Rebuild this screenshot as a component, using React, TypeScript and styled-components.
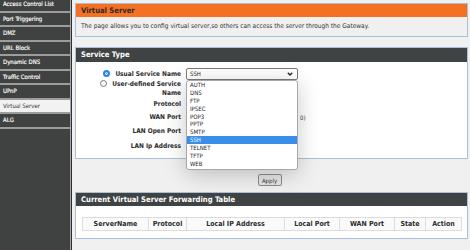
import React from "react";
import styled, { createGlobalStyle } from "styled-components";

const FONT = `"DejaVu Sans Condensed", "DejaVu Sans", Tahoma, sans-serif`;

const GlobalStyle = createGlobalStyle`
  html, body { margin: 0; padding: 0; }
  body {
    background: #f0f0f0;
    font-family: ${FONT};
    color: #333;
    overflow: hidden;
  }
  * { box-sizing: border-box; }
`;

const Page = styled.div`
  display: flex;
  width: 470px;
  height: 250px;
  overflow: hidden;
`;

const Nav = styled.nav`
  width: 71px;
  flex-shrink: 0;
  background: #404242;
  border-right: 1px solid #a3a3a3;
  box-shadow: 1px 0 0 #2f3131;
  overflow: hidden;
`;

const NavList = styled.ul`
  list-style: none;
  margin: -2px 0 0;
  padding: 0;
`;

const NavItem = styled.li<{ $active?: boolean }>`
  height: 14.5px;
  line-height: 12.5px;
  padding-left: 3px;
  font-size: 6px;
  font-weight: normal;
  color: ${(p) => (p.$active ? "#333" : "#fff")};
  background: ${(p) => (p.$active ? "#f2f2f2" : "#404242")};
  border-bottom: 2px solid #9d9d9d;
  white-space: nowrap;
  -webkit-text-stroke: ${(p) => (p.$active ? "0" : "0.15px #fff")};
`;

const Main = styled.main`
  flex: 1;
  min-width: 0;
  padding: 3px 2px 0 4px;
  display: flex;
  flex-direction: column;
`;

const Panel = styled.section<{ $gap?: number }>`
  border: 1px solid #a9c0d8;
  margin-bottom: ${(p) => p.$gap ?? 0}px;
`;

const PanelHeader = styled.h2<{ $tone: "orange" | "dark"; $h: number }>`
  margin: 0;
  height: ${(p) => p.$h}px;
  line-height: ${(p) => p.$h}px;
  padding-left: 5px;
  font-size: 7.6px;
  font-weight: bold;
  letter-spacing: 0;
  color: ${(p) => (p.$tone === "orange" ? "#2b2b2b" : "#fff")};
  background: ${(p) => (p.$tone === "orange" ? "#f47023" : "#404343")};
`;

const InfoBody = styled.div`
  height: 19px;
  line-height: 19px;
  padding-left: 5px;
  font-size: 6.5px;
  color: #333;
  background: #f0f0f0;
`;

const FormBody = styled.div`
  height: 96px;
  background: #fff;
  padding: 6px 0 0 18px;
`;

const FormGrid = styled.div`
  display: grid;
  grid-template-columns: 87px 112px;
  grid-template-rows: 12px 18px 12px 14px 14px 16px;
  column-gap: 5px;
  align-items: center;
`;

const Label = styled.div`
  text-align: right;
  font-size: 6.5px;
  font-weight: bold;
  line-height: 9px;
  color: #2a2a2a;
`;

const Radio = styled.span<{ $checked?: boolean }>`
  display: inline-block;
  width: 7px;
  height: 7px;
  margin-right: 5px;
  vertical-align: -1px;
  border-radius: 50%;
  border: ${(p) => (p.$checked ? "2px solid #2b83e8" : "1px solid #777")};
  background: ${(p) => (p.$checked ? "#2b83e8" : "#fff")};
  box-shadow: ${(p) => (p.$checked ? "inset 0 0 0 1px #fff" : "none")};
`;

const Field = styled.div`
  display: flex;
  align-items: center;
  gap: 2px;
  position: relative;
  height: 100%;
`;

const SelectBox = styled.div`
  position: relative;
  width: 112px;
  height: 12px;
  border: 1px solid #7a7a7a;
  border-radius: 2px;
  background: #fff;
  font-size: 6px;
  line-height: 10px;
  padding-left: 3px;
  color: #222;
  display: flex;
  align-items: center;
  justify-content: space-between;
  padding-right: 4px;
`;

const TextInput = styled.div<{ $w: number }>`
  width: ${(p) => p.$w}px;
  height: 11px;
  border: 1px solid #8a8a8a;
  border-radius: 1px;
  background: #fff;
  flex-shrink: 0;
`;

const Hint = styled.span`
  font-size: 6px;
  color: #333;
  white-space: nowrap;
`;

const Popup = styled.ul`
  position: absolute;
  z-index: 5;
  top: 11px;
  left: -1px;
  width: 112px;
  margin: 0;
  padding: 0 0 1px;
  list-style: none;
  background: #fff;
  border: 1px solid #a7a7a7;
  border-radius: 3px;
  box-shadow: 0 4px 22px rgba(0, 0, 0, 0.22);
`;

const Option = styled.li<{ $sel?: boolean }>`
  height: 7.9px;
  line-height: 7.9px;
  padding-left: 3px;
  font-size: 6px;
  color: ${(p) => (p.$sel ? "#fff" : "#222")};
  background: ${(p) => (p.$sel ? "#3a8de8" : "transparent")};
`;

const ApplyRow = styled.div`
  display: flex;
  justify-content: center;
  padding: 15px 0 6px;
`;

const Button = styled.button`
  width: 24px;
  height: 12px;
  padding: 0;
  margin-left: -4px;
  font-family: ${FONT};
  font-size: 6px;
  color: #333;
  background: #e6e6e6;
  border: 1px solid #8c8c8c;
  border-radius: 2px;
`;

const TableBody = styled.div`
  height: 32px;
  background: #fff;
  padding: 11px 5px 0 6px;
`;

const Table = styled.table`
  width: 100%;
  border-collapse: collapse;
  table-layout: fixed;
`;

const Th = styled.th<{ $w: number }>`
  width: ${(p) => p.$w}px;
  height: 13px;
  padding: 0;
  font-size: 7px;
  font-weight: bold;
  color: #2a2a2a;
  text-align: center;
  background: #fafafa;
  border: 1px solid #dcdcdc;
`;

const Chevron = () => (
  <svg width="6" height="4" viewBox="0 0 6 4">
    <polyline points="0.8,0.8 3,3 5.2,0.8" fill="none" stroke="#222" strokeWidth="1.3" />
  </svg>
);

const navItems = [
  "Access Control List",
  "Port Triggering",
  "DMZ",
  "URL Block",
  "Dynamic DNS",
  "Traffic Control",
  "UPnP",
  "Virtual Server",
  "ALG",
];

const services = ["AUTH", "DNS", "FTP", "IPSEC", "POP3", "PPTP", "SMTP", "SSH", "TELNET", "TFTP", "WEB"];

const columns: [string, number][] = [
  ["ServerName", 66],
  ["Protocol", 38],
  ["Local IP Address", 98],
  ["Local Port", 55],
  ["WAN Port", 55],
  ["State", 31],
  ["Action", 36],
];

export default function App() {
  return (
    <>
      <GlobalStyle />
      <Page>
        <Nav>
          <NavList>
            {navItems.map((n) => (
              <NavItem key={n} $active={n === "Virtual Server"}>
                {n}
              </NavItem>
            ))}
          </NavList>
        </Nav>
        <Main>
          <Panel $gap={10}>
            <PanelHeader $tone="orange" $h={13}>Virtual Server</PanelHeader>
            <InfoBody>
              The page allows you to config virtual server,so others can access the server through the Gateway.
            </InfoBody>
          </Panel>

          <Panel>
            <PanelHeader $tone="dark" $h={14}>Service Type</PanelHeader>
            <FormBody>
              <FormGrid>
                <Label>
                  <Radio $checked />
                  Usual Service Name
                </Label>
                <Field>
                  <SelectBox>
                    <span>SSH</span>
                    <Chevron />
                    <Popup>
                      {services.map((s) => (
                        <Option key={s} $sel={s === "SSH"}>
                          {s}
                        </Option>
                      ))}
                    </Popup>
                  </SelectBox>
                </Field>

                <Label>
                  <Radio />
                  User-defined Service Name
                </Label>
                <Field />

                <Label>Protocol</Label>
                <Field>
                  <SelectBox>
                    <span />
                    <Chevron />
                  </SelectBox>
                </Field>

                <Label>WAN Port</Label>
                <Field>
                  <TextInput $w={112} />
                  <Hint>0)</Hint>
                </Field>

                <Label>LAN Open Port</Label>
                <Field>
                  <TextInput $w={70} />
                </Field>

                <Label>LAN Ip Address</Label>
                <Field>
                  <TextInput $w={100} />
                </Field>
              </FormGrid>
            </FormBody>
          </Panel>

          <ApplyRow>
            <Button>Apply</Button>
          </ApplyRow>

          <Panel>
            <PanelHeader $tone="dark" $h={13}>Current Virtual Server Forwarding Table</PanelHeader>
            <TableBody>
              <Table>
                <thead>
                  <tr>
                    {columns.map(([c, w]) => (
                      <Th key={c} $w={w}>
                        {c}
                      </Th>
                    ))}
                  </tr>
                </thead>
              </Table>
            </TableBody>
          </Panel>
        </Main>
      </Page>
    </>
  );
}
